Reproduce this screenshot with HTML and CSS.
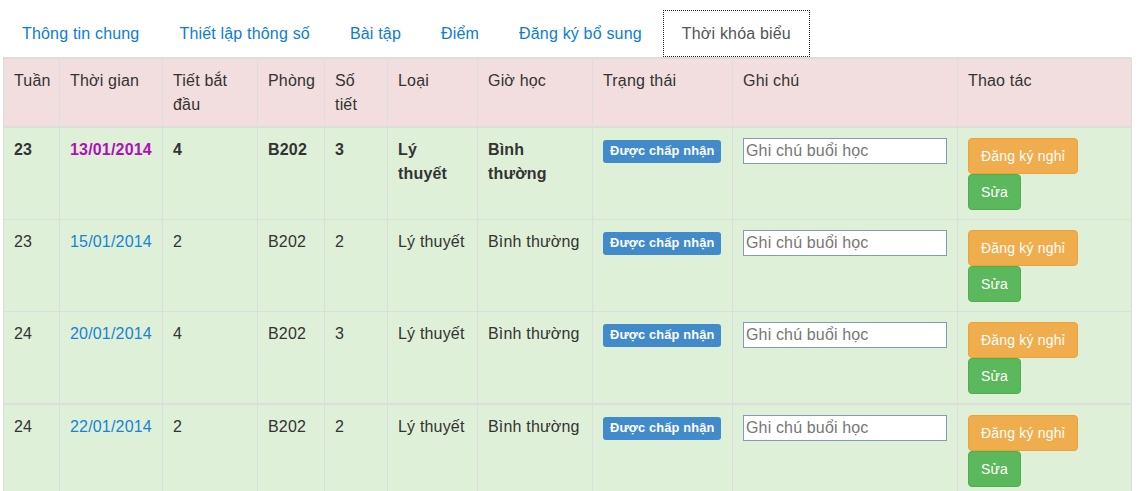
FILE: index.html
```html
<!DOCTYPE html>
<html lang="vi">
<head>
<meta charset="utf-8">
<title>Thời khóa biểu</title>
<link rel="stylesheet" href="styles.css">
</head>
<body>
<div class="page">
  <ul class="tabs">
    <li><a class="tab">Thông tin chung</a></li>
    <li><a class="tab">Thiết lập thông số</a></li>
    <li><a class="tab">Bài tập</a></li>
    <li><a class="tab">Điểm</a></li>
    <li><a class="tab">Đăng ký bổ sung</a></li>
    <li><a class="tab active">Thời khóa biểu</a></li>
  </ul>
  <table class="schedule">
    <colgroup>
      <col class="c-week"><col class="c-date"><col class="c-start"><col class="c-room"><col class="c-count"><col class="c-type"><col class="c-hour"><col class="c-status"><col class="c-note"><col class="c-act">
    </colgroup>
    <thead>
      <tr>
        <th>Tuần</th><th>Thời gian</th><th>Tiết bắt đầu</th><th>Phòng</th><th>Số tiết</th><th>Loại</th><th>Giờ học</th><th>Trạng thái</th><th>Ghi chú</th><th>Thao tác</th>
      </tr>
    </thead>
    <tbody>
      <tr class="current">
        <td>23</td><td><a class="date visited">13/01/2014</a></td><td>4</td><td>B202</td><td>3</td><td>Lý thuyết</td><td>Bình thường</td>
        <td><span class="badge">Được chấp nhận</span></td>
        <td><input class="note" type="text" placeholder="Ghi chú buổi học"></td>
        <td><div class="actions"><button class="btn btn-warn">Đăng ký nghỉ</button><button class="btn btn-ok">Sửa</button></div></td>
      </tr>
      <tr>
        <td>23</td><td><a class="date">15/01/2014</a></td><td>2</td><td>B202</td><td>2</td><td>Lý thuyết</td><td>Bình thường</td>
        <td><span class="badge">Được chấp nhận</span></td>
        <td><input class="note" type="text" placeholder="Ghi chú buổi học"></td>
        <td><div class="actions"><button class="btn btn-warn">Đăng ký nghỉ</button><button class="btn btn-ok">Sửa</button></div></td>
      </tr>
      <tr>
        <td>24</td><td><a class="date">20/01/2014</a></td><td>4</td><td>B202</td><td>3</td><td>Lý thuyết</td><td>Bình thường</td>
        <td><span class="badge">Được chấp nhận</span></td>
        <td><input class="note" type="text" placeholder="Ghi chú buổi học"></td>
        <td><div class="actions"><button class="btn btn-warn">Đăng ký nghỉ</button><button class="btn btn-ok">Sửa</button></div></td>
      </tr>
    </tbody>
    <tbody class="group">
      <tr>
        <td>24</td><td><a class="date">22/01/2014</a></td><td>2</td><td>B202</td><td>2</td><td>Lý thuyết</td><td>Bình thường</td>
        <td><span class="badge">Được chấp nhận</span></td>
        <td><input class="note" type="text" placeholder="Ghi chú buổi học"></td>
        <td><div class="actions"><button class="btn btn-warn">Đăng ký nghỉ</button><button class="btn btn-ok">Sửa</button></div></td>
      </tr>
    </tbody>
  </table>
</div>
</body>
</html>
```
FILE: styles.css
```css
html, body {
  margin: 0;
  padding: 0;
  background: #fff;
}
body {
  font-family: "Liberation Sans", Arial, sans-serif;
  font-size: 16px;
  line-height: 24px;
  letter-spacing: 0.18px;
  color: #333;
}
.page {
  padding: 10px 0 0 3px;
  width: 1128px;
}
.tabs {
  list-style: none;
  margin: 0;
  padding: 0;
  display: flex;
  border-bottom: 1px solid #ddd;
}
.tab {
  display: block;
  padding: 11px 18px 10px;
  margin-right: 2px;
  border: 1px solid transparent;
  color: #0c7cd5;
  cursor: pointer;
}
.tab.active {
  color: #555;
  background: #fff;
  border: 1px dotted #222;
}
.schedule {
  width: 1128px;
  table-layout: fixed;
  border-collapse: collapse;
  border: 1px solid #ddd;
}
.c-week { width: 56px; }
.c-date { width: 103px; }
.c-start { width: 95px; }
.c-room { width: 67px; }
.c-count { width: 63px; }
.c-type { width: 90px; }
.c-hour { width: 115px; }
.c-status { width: 140px; }
.c-note { width: 225px; }
.c-act { width: 174px; }
.schedule th,
.schedule td {
  text-align: left;
  vertical-align: top;
  border: 1px solid #ddd;
}
.schedule th {
  font-weight: normal;
  background: #f2dede;
  padding: 10px 10px 9px;
  border-bottom-width: 2px;
}
.schedule td {
  background: #dff0d8;
  padding: 10px 10px 9px;
}
.schedule tbody.group tr td {
  border-top-width: 2px;
}
.current td {
  font-weight: bold;
}
.date {
  color: #1583d6;
  cursor: pointer;
}
.date.visited {
  color: #b10fb8;
}
.badge {
  display: inline-block;
  white-space: nowrap;
  margin-top: 2px;
  background: #428bca;
  color: #fff;
  font-weight: bold;
  font-size: 12.8px;
  letter-spacing: 0.15px;
  line-height: 1;
  padding: 5px 7px 5px;
  border-radius: 3px;
}
.note {
  display: block;
  box-sizing: border-box;
  width: 204px;
  height: 26px;
  margin: 0;
  padding: 1px 2px;
  border: 1px solid #7f9db9;
  background: #fff;
  font-family: "Liberation Sans", Arial, sans-serif;
  font-size: 16px;
  letter-spacing: 0.15px;
  color: #333;
}
.note::placeholder {
  color: #777;
}
.actions {
  display: flex;
  flex-direction: column;
  align-items: flex-start;
}
.btn {
  font-family: "Liberation Sans", Arial, sans-serif;
  font-size: 14px;
  letter-spacing: 0.2px;
  font-weight: normal;
  line-height: 22px;
  padding: 6px 12px;
  border: 1px solid transparent;
  border-radius: 4px;
  color: #fff;
  cursor: pointer;
}
.btn-warn {
  background: #f0ad4e;
  border-color: #eea236;
}
.btn-ok {
  background: #5cb85c;
  border-color: #4cae4c;
}
```
